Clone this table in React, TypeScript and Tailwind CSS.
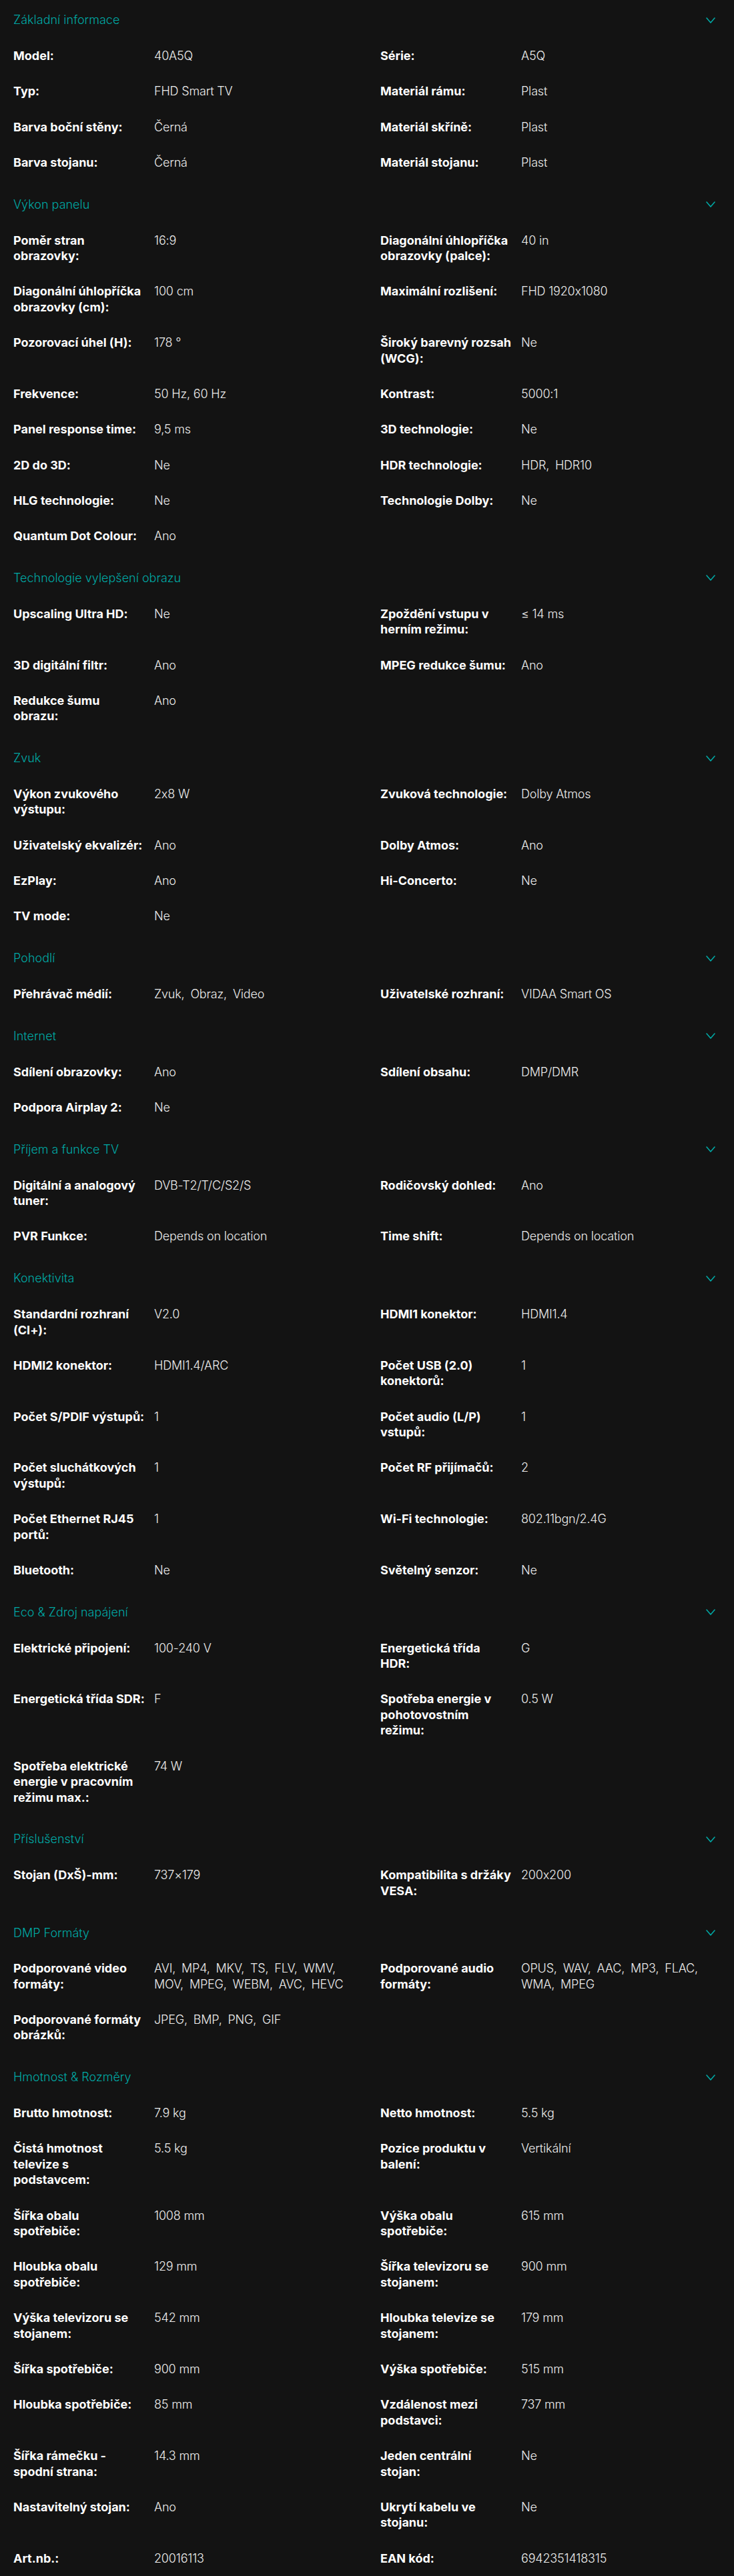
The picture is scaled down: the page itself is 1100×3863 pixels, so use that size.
import React from 'react';

type Val = string | string[];
type Cell = [string, Val] | null;
type Section = { title: string; rows: [Cell, Cell][] };

// labels keep the line breaks of the original layout
const sections: Section[] = [
  {
    title: 'Základní informace',
    rows: [
      [['Model:', '40A5Q'], ['Série:', 'A5Q']],
      [['Typ:', 'FHD Smart TV'], ['Materiál rámu:', 'Plast']],
      [['Barva boční stěny:', 'Černá'], ['Materiál skříně:', 'Plast']],
      [['Barva stojanu:', 'Černá'], ['Materiál stojanu:', 'Plast']],
    ],
  },
  {
    title: 'Výkon panelu',
    rows: [
      [['Poměr stran\nobrazovky:', '16:9'], ['Diagonální úhlopříčka\nobrazovky (palce):', '40 in']],
      [['Diagonální úhlopříčka\nobrazovky (cm):', '100 cm'], ['Maximální rozlišení:', 'FHD 1920x1080']],
      [['Pozorovací úhel (H):', '178 °'], ['Široký barevný rozsah\n(WCG):', 'Ne']],
      [['Frekvence:', '50 Hz, 60 Hz'], ['Kontrast:', '5000:1']],
      [['Panel response time:', '9,5 ms'], ['3D technologie:', 'Ne']],
      [['2D do 3D:', 'Ne'], ['HDR technologie:', ['HDR', 'HDR10']]],
      [['HLG technologie:', 'Ne'], ['Technologie Dolby:', 'Ne']],
      [['Quantum Dot Colour:', 'Ano'], null],
    ],
  },
  {
    title: 'Technologie vylepšení obrazu',
    rows: [
      [['Upscaling Ultra HD:', 'Ne'], ['Zpoždění vstupu v\nherním režimu:', '≤ 14 ms']],
      [['3D digitální filtr:', 'Ano'], ['MPEG redukce šumu:', 'Ano']],
      [['Redukce šumu\nobrazu:', 'Ano'], null],
    ],
  },
  {
    title: 'Zvuk',
    rows: [
      [['Výkon zvukového\nvýstupu:', '2x8 W'], ['Zvuková technologie:', 'Dolby Atmos']],
      [['Uživatelský ekvalizér:', 'Ano'], ['Dolby Atmos:', 'Ano']],
      [['EzPlay:', 'Ano'], ['Hi-Concerto:', 'Ne']],
      [['TV mode:', 'Ne'], null],
    ],
  },
  {
    title: 'Pohodlí',
    rows: [[['Přehrávač médií:', ['Zvuk', 'Obraz', 'Video']], ['Uživatelské rozhraní:', 'VIDAA Smart OS']]],
  },
  {
    title: 'Internet',
    rows: [
      [['Sdílení obrazovky:', 'Ano'], ['Sdílení obsahu:', 'DMP/DMR']],
      [['Podpora Airplay 2:', 'Ne'], null],
    ],
  },
  {
    title: 'Příjem a funkce TV',
    rows: [
      [['Digitální a analogový\ntuner:', 'DVB-T2/T/C/S2/S'], ['Rodičovský dohled:', 'Ano']],
      [['PVR Funkce:', 'Depends on location'], ['Time shift:', 'Depends on location']],
    ],
  },
  {
    title: 'Konektivita',
    rows: [
      [['Standardní rozhraní\n(CI+):', 'V2.0'], ['HDMI1 konektor:', 'HDMI1.4']],
      [['HDMI2 konektor:', 'HDMI1.4/ARC'], ['Počet USB (2.0)\nkonektorů:', '1']],
      [['Počet S/PDIF výstupů:', '1'], ['Počet audio (L/P)\nvstupů:', '1']],
      [['Počet sluchátkových\nvýstupů:', '1'], ['Počet RF přijímačů:', '2']],
      [['Počet Ethernet RJ45\nportů:', '1'], ['Wi-Fi technologie:', '802.11bgn/2.4G']],
      [['Bluetooth:', 'Ne'], ['Světelný senzor:', 'Ne']],
    ],
  },
  {
    title: 'Eco & Zdroj napájení',
    rows: [
      [['Elektrické připojení:', '100-240 V'], ['Energetická třída\nHDR:', 'G']],
      [['Energetická třída SDR:', 'F'], ['Spotřeba energie v\npohotovostním\nrežimu:', '0.5 W']],
      [['Spotřeba elektrické\nenergie v pracovním\nrežimu max.:', '74 W'], null],
    ],
  },
  {
    title: 'Příslušenství',
    rows: [[['Stojan (DxŠ)-mm:', '737×179'], ['Kompatibilita s držáky\nVESA:', '200x200']]],
  },
  {
    title: 'DMP Formáty',
    rows: [
      [
        ['Podporované video\nformáty:', ['AVI', 'MP4', 'MKV', 'TS', 'FLV', 'WMV', 'MOV', 'MPEG', 'WEBM', 'AVC', 'HEVC']],
        ['Podporované audio\nformáty:', ['OPUS', 'WAV', 'AAC', 'MP3', 'FLAC', 'WMA', 'MPEG']],
      ],
      [['Podporované formáty\nobrázků:', ['JPEG', 'BMP', 'PNG', 'GIF']], null],
    ],
  },
  {
    title: 'Hmotnost & Rozměry',
    rows: [
      [['Brutto hmotnost:', '7.9 kg'], ['Netto hmotnost:', '5.5 kg']],
      [['Čistá hmotnost\ntelevize s\npodstavcem:', '5.5 kg'], ['Pozice produktu v\nbalení:', 'Vertikální']],
      [['Šířka obalu\nspotřebiče:', '1008 mm'], ['Výška obalu\nspotřebiče:', '615 mm']],
      [['Hloubka obalu\nspotřebiče:', '129 mm'], ['Šířka televizoru se\nstojanem:', '900 mm']],
      [['Výška televizoru se\nstojanem:', '542 mm'], ['Hloubka televize se\nstojanem:', '179 mm']],
      [['Šířka spotřebiče:', '900 mm'], ['Výška spotřebiče:', '515 mm']],
      [['Hloubka spotřebiče:', '85 mm'], ['Vzdálenost mezi\npodstavci:', '737 mm']],
      [['Šířka rámečku -\nspodní strana:', '14.3 mm'], ['Jeden centrální\nstojan:', 'Ne']],
      [['Nastavitelný stojan:', 'Ano'], ['Ukrytí kabelu ve\nstojanu:', 'Ne']],
      [['Art.nb.:', '20016113'], ['EAN kód:', '6942351418315']],
    ],
  },
];

function Chevron() {
  return (
    <svg width="14" height="9" viewBox="0 0 14 9" fill="none" className="text-[#00a9a5]">
      <polyline points="1,1 7,8 13,1" stroke="currentColor" strokeWidth="1.6" strokeLinejoin="round" strokeLinecap="round" />
    </svg>
  );
}

function Value({ v }: { v: Val }) {
  if (typeof v === 'string') return <>{v}</>;
  return (
    <>
      {v.map((item, i) => (
        <React.Fragment key={item + i}>
          <span className={i < v.length - 1 ? 'mr-[4px]' : ''}>
            {item}
            {i < v.length - 1 ? ',' : ''}
          </span>{' '}
        </React.Fragment>
      ))}
    </>
  );
}

function SpecCell({ cell }: { cell: Cell }) {
  if (!cell) return <div />;
  return (
    <div className="grid grid-cols-[203px_1fr] gap-x-2">
      <div className="whitespace-pre-line font-bold text-white">{cell[0]}</div>
      <div className="font-light tracking-[-0.01em] text-[#ededed]">
        <Value v={cell[1]} />
      </div>
    </div>
  );
}

export default function App() {
  return (
    <div className="min-h-screen bg-[#131313] pt-[3px] font-[Inter,'Noto_Sans',sans-serif] text-[18px] leading-[23.45px] [font-feature-settings:'calt'_0]">
      {sections.map((s) => (
        <section key={s.title} className="pb-[9.3px]">
          <button className="flex h-[54px] w-full items-center justify-between pl-5 pr-[28px] text-left">
            <span className="font-light text-[#00a9a5]">{s.title}</span>
            <Chevron />
          </button>
          <div className="px-5">
            {s.rows.map((r, i) => (
              <div key={i} className="grid grid-cols-2 gap-x-10 py-[14.95px]">
                <SpecCell cell={r[0]} />
                <SpecCell cell={r[1]} />
              </div>
            ))}
          </div>
        </section>
      ))}
    </div>
  );
}
